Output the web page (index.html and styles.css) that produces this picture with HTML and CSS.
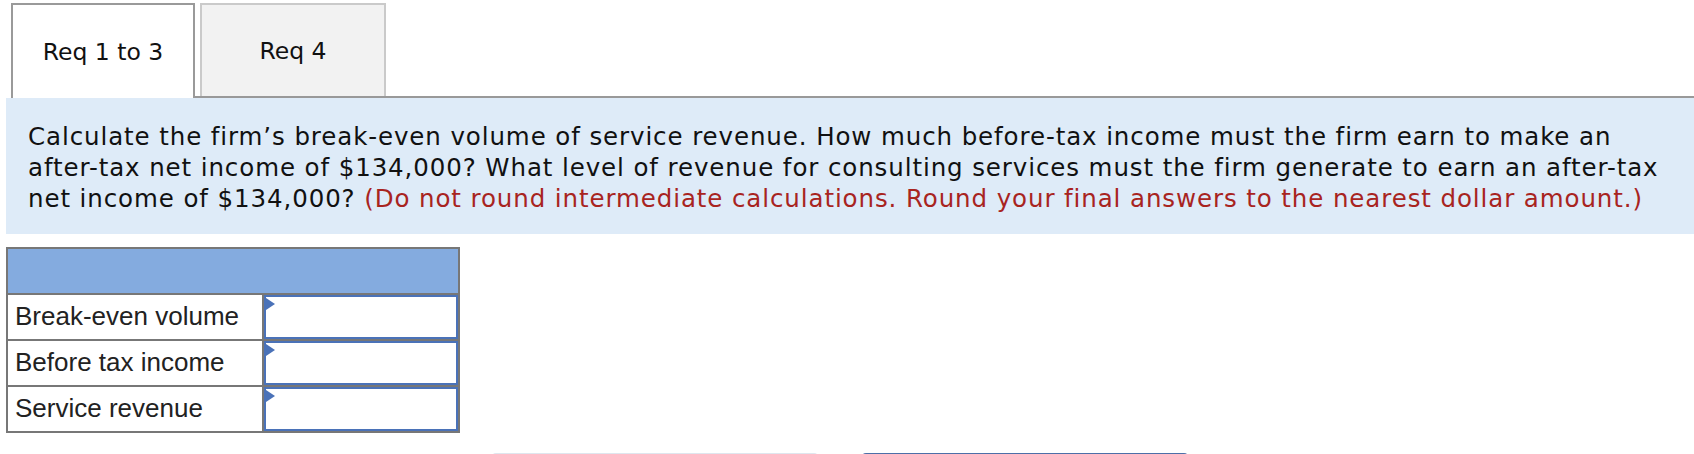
FILE: index.html
```html
<!DOCTYPE html>
<html lang="en">
<head>
<meta charset="utf-8">
<title>Break-even</title>
<link rel="stylesheet" href="styles.css">
</head>
<body>
<div class="page">
  <div class="tabs">
    <div class="tab tab-active">Req 1 to 3</div>
    <div class="tab-rest">
      <div class="tab tab-idle">Req 4</div>
    </div>
  </div>
  <div class="panel">
    <p class="question">Calculate the firm’s break-even volume of service revenue. How much before-tax income must the firm earn to make an<br>after-tax net income of $134,000? What level of revenue for consulting services must the firm generate to earn an after-tax<br>net income of $134,000? <span class="note">(Do not round intermediate calculations. Round your final answers to the nearest dollar amount.)</span></p>
  </div>
  <div class="grid">
    <div class="grid-head"></div>
    <div class="label">Break-even volume</div>
    <div class="answer"><input class="field" type="text" aria-label="Break-even volume"></div>
    <div class="label">Before tax income</div>
    <div class="answer"><input class="field" type="text" aria-label="Before tax income"></div>
    <div class="label">Service revenue</div>
    <div class="answer"><input class="field" type="text" aria-label="Service revenue"></div>
  </div>
  <div class="nav">
    <div class="nav-btn nav-prev" aria-label="Previous: Req 1 to 3"></div>
    <div class="nav-btn nav-next" aria-label="Next: Req 4"></div>
  </div>
</div>
</body>
</html>
```
FILE: styles.css
```css
html, body {
  margin: 0;
  padding: 0;
  background: #ffffff;
  overflow: hidden;
}

.page {
  padding: 3px 0 0 6px;
  font-family: "DejaVu Sans", Verdana, sans-serif;
  color: #111;
}

.tabs {
  display: flex;
  height: 95px;
  padding-left: 5px;
}

.tab {
  box-sizing: border-box;
  display: flex;
  align-items: center;
  justify-content: center;
  font-size: 23.5px;
  color: #111;
}

.tab-active {
  width: 184px;
  height: 95px;
  background: #fff;
  border: 2px solid #9a9a9a;
  border-bottom: 0;
}

.tab-rest {
  flex: 1;
  display: flex;
  padding-left: 5px;
  border-bottom: 2px solid #999;
}

.tab-idle {
  width: 186px;
  height: 93px;
  background: #f2f2f2;
  border: 2px solid #cacaca;
  border-bottom: 0;
}

.panel {
  background: #deebf8;
  padding: 23px 20px 20px 22px;
}

.question {
  margin: 0;
  font-size: 24.5px;
  letter-spacing: 0.9px;
  line-height: 31px;
  color: #111;
  white-space: nowrap;
}

.note {
  color: #a8241f;
}

.grid {
  margin-top: 13px;
  display: grid;
  grid-template-columns: 254px 194px;
  grid-auto-rows: 44px;
  gap: 2px;
  width: max-content;
  border: 2px solid #777;
  background: #777;
}

.grid-head {
  grid-column: 1 / 3;
  background: #84abdf;
}

.label {
  background: #fff;
  display: flex;
  align-items: center;
  padding-left: 7px;
  padding-bottom: 1px;
  font-family: "Liberation Sans", Arial, sans-serif;
  font-size: 26px;
  color: #222;
}

.answer {
  position: relative;
  background: #fff;
  display: flex;
}

.answer::before {
  content: "";
  position: absolute;
  left: 2px;
  top: 3px;
  width: 0;
  height: 0;
  border-left: 9px solid #4a72b8;
  border-top: 6px solid transparent;
  border-bottom: 6px solid transparent;
}

.field {
  box-sizing: border-box;
  width: 100%;
  height: 100%;
  margin: 0;
  border: 2px solid #4a72b8;
  background: #fff;
  font-size: 20px;
  outline: none;
}

.nav {
  display: flex;
  gap: 44px;
  margin-top: 20px;
  padding-left: 486px;
}

.nav-btn {
  box-sizing: border-box;
  width: 326px;
  height: 44px;
  border-radius: 4px;
}

.nav-prev {
  background: #dfe6ee;
}

.nav-next {
  background: #4d6fa8;
}
```
